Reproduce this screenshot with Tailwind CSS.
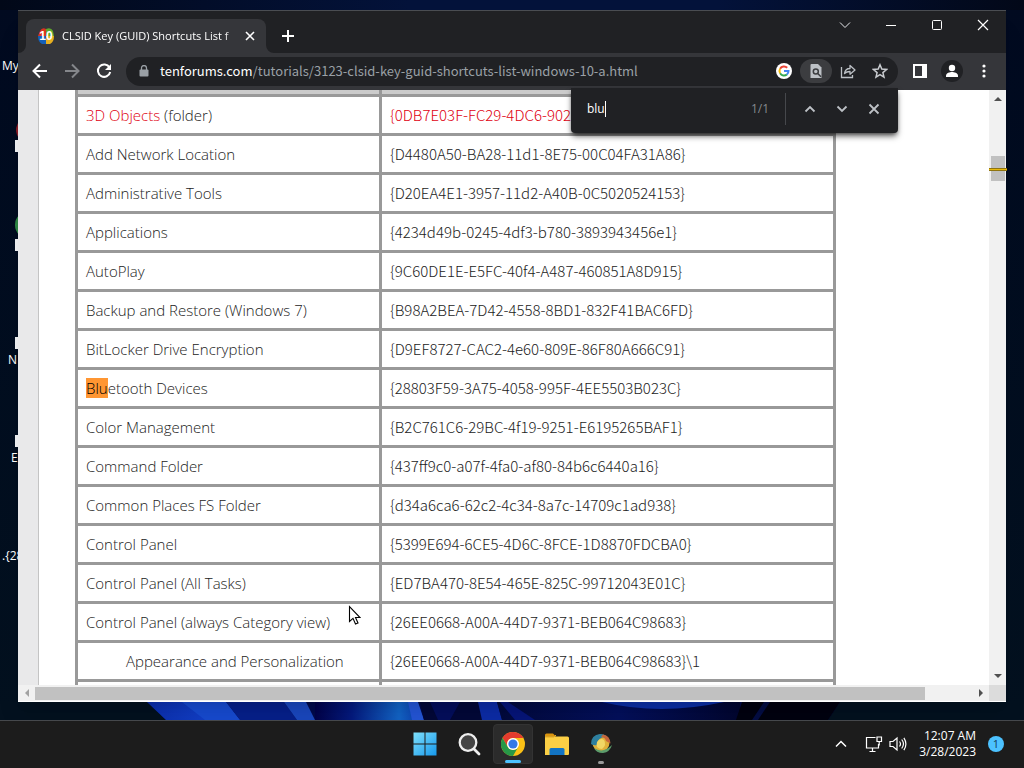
<!DOCTYPE html>
<html lang="en">
<head>
    <meta charset="UTF-8">
    <meta name="viewport" content="width=device-width, initial-scale=1.0">
    <title>CLSID Key (GUID) Shortcuts List</title>
    <script src="https://cdn.jsdelivr.net/npm/@tailwindcss/browser@4"></script>
</head>
<body class="h-screen flex flex-col overflow-hidden bg-[#020b1c] font-['Open_Sans',sans-serif] text-white">

    <!-- Desktop -->
    <div class="flex-1 min-h-0 relative overflow-hidden bg-linear-to-b from-[#010a20] to-[#03111f]">
        <svg class="absolute inset-x-0 top-0 w-full h-2.5" viewBox="0 0 1024 10" preserveAspectRatio="none" aria-hidden="true">
            <defs>
                <linearGradient id="sky"><stop offset="0" stop-color="#010818"/><stop offset=".4" stop-color="#03123a"/><stop offset=".7" stop-color="#03123a"/><stop offset="1" stop-color="#020818"/></linearGradient>
            </defs>
            <rect width="1024" height="10" fill="url(#sky)"/>
        </svg>
        <!-- Bloom wallpaper -->
        <svg class="absolute inset-x-0 bottom-0 w-full h-[18px]" viewBox="0 0 1024 18" preserveAspectRatio="none" aria-hidden="true">
            <defs>
                <linearGradient id="p1"><stop offset="0" stop-color="#0b2fae"/><stop offset="1" stop-color="#1548d8"/></linearGradient>
                <linearGradient id="p2"><stop offset="0" stop-color="#02024a"/><stop offset=".35" stop-color="#041a80"/><stop offset=".8" stop-color="#1265c8"/><stop offset="1" stop-color="#0b3cae"/></linearGradient>
                <linearGradient id="p3"><stop offset="0" stop-color="#02093c"/><stop offset=".5" stop-color="#030f5c"/><stop offset="1" stop-color="#020630"/></linearGradient>
            </defs>
            <rect width="1024" height="18" fill="#03111f"/>
            <path d="M147 0H840L828 18H166z" fill="#020a4c"/>
            <path d="M147 0H226L240 18H166z" fill="url(#p1)"/>
            <path d="M182 0H226L240 18H205z" fill="#174bd2"/>
            <path d="M226 0H284L297 18H240z" fill="#06208c"/>
            <path d="M284 0H306L315 18H297z" fill="#1a48c0"/>
            <path d="M315 0H412L420 18H315z" fill="url(#p2)"/>
            <path d="M408 0H418L424 18H412z" fill="#2456d8"/>
            <path d="M420 0H478L484 18H424z" fill="#030838"/>
            <path d="M430 0H460L450 18H438z" fill="#040e5c"/>
            <path d="M478 0H497L502 18H482z" fill="#0c2ca8"/>
            <path d="M497 0H740V18H502z" fill="url(#p3)"/>
            <path d="M508 0L535 18H515L500 0z" fill="#06157a"/>
            <path d="M602 0Q660 14 724 0z" fill="#0c30a8"/>
            <path d="M742 0H840L828 18H736z" fill="#01020f"/>
            <path d="M764 0H770L758 18H752z" fill="#040d44"/>
        </svg>

        <!-- Desktop icons, mostly behind the window -->
        <div class="absolute left-0.5 top-[58px] text-xs whitespace-nowrap">My</div>
        <div class="absolute left-4 top-[118px] size-6 rounded-full bg-[#8c1c28]"></div>
        <div class="absolute left-[15px] top-[211px] size-7 rounded-full bg-[#2f8a46]"></div>
        <div class="absolute left-[15px] top-[140px] size-3 bg-gray-100"></div>
        <div class="absolute left-[15px] top-[239px] size-3 bg-gray-100"></div>
        <div class="absolute left-[15px] top-[337px] size-3 bg-gray-100"></div>
        <div class="absolute left-2 top-[352px] text-xs whitespace-nowrap">N</div>
        <div class="absolute left-[15px] top-[435px] size-3 bg-gray-100"></div>
        <div class="absolute left-[11px] top-[450px] text-xs whitespace-nowrap">E</div>
        <div class="absolute left-0.5 top-[548px] text-xs whitespace-nowrap">.{28</div>

        <!-- Browser window -->
        <main class="absolute left-[18px] right-[18px] top-2.5 bottom-[18px] flex flex-col bg-[#202124] border-t border-[#4a4d52] shadow-xl">

            <!-- Tab strip -->
            <div class="h-[42px] shrink-0 flex items-end">
                <div class="relative ml-2 w-60 h-[34px] flex items-center pl-3 pr-2 gap-2 rounded-t-lg bg-[#35363a]">
                    <svg class="absolute -left-2 bottom-0 size-2" viewBox="0 0 8 8" aria-hidden="true"><path d="M8 0v8H0a8 8 0 0 0 8-8z" fill="#35363a"/></svg>
                    <svg class="absolute -right-2 bottom-0 size-2" viewBox="0 0 8 8" aria-hidden="true"><path d="M0 0v8h8a8 8 0 0 1-8-8z" fill="#35363a"/></svg>
                    <div class="relative size-4 shrink-0">
                        <svg class="size-4" viewBox="0 0 16 16" aria-hidden="true">
                            <path d="M8 8V1Q4-1 2 3L0 8z" fill="#d9341f"/>
                            <path d="M8 8V1Q13-1 15 3L16 8z" fill="#5fa82c"/>
                            <path d="M8 8H0Q0 14 4 16H8z" fill="#1560b8"/>
                            <path d="M8 8H16Q16 14 12 16H8z" fill="#e8b020"/>
                        </svg>
                        <span class="absolute inset-0 text-center text-xs leading-4 font-bold font-['Liberation_Sans',sans-serif]">10</span>
                    </div>
                    <span class="flex-1 min-w-0 whitespace-nowrap text-[11px] mask-r-from-95% mask-r-to-100%">CLSID Key (GUID) Shortcuts List f</span>
                    <button aria-label="Close tab" class="size-4 shrink-0 flex items-center justify-center">
                        <svg class="size-4" viewBox="0 0 16 16" fill="none" stroke="#fff" stroke-width="1.6"><path d="M4 4l8 8M12 4l-8 8"/></svg>
                    </button>
                </div>
                <button aria-label="New tab" class="size-8 ml-1.5 mb-px flex items-center justify-center">
                    <svg class="size-4" viewBox="0 0 16 16" fill="none" stroke="#fff" stroke-width="2"><path d="M8 2v12M2 8h12"/></svg>
                </button>
                <div class="ml-auto self-start flex h-7">
                    <button aria-label="Search tabs" class="w-[46px] flex items-center justify-center">
                        <svg class="size-3" viewBox="0 0 12 12" fill="none" stroke="#e8eaed"><path d="M1 3.5l5 5 5-5"/></svg>
                    </button>
                    <button aria-label="Minimize" class="w-[46px] flex items-center justify-center">
                        <svg class="size-3" viewBox="0 0 12 12" fill="none" stroke="#fff"><path d="M1 6.5h10"/></svg>
                    </button>
                    <button aria-label="Maximize" class="w-[46px] flex items-center justify-center">
                        <svg class="size-3" viewBox="0 0 12 12" fill="none" stroke="#fff"><rect x="1.5" y="1.5" width="9" height="9" rx="1"/></svg>
                    </button>
                    <button aria-label="Close" class="w-[46px] flex items-center justify-center">
                        <svg class="size-3" viewBox="0 0 12 12" fill="none" stroke="#fff" stroke-width="1.2"><path d="M1 1l10 10M11 1L1 11"/></svg>
                    </button>
                </div>
            </div>

            <!-- Toolbar -->
            <div class="h-[37px] shrink-0 flex items-center pl-1.5 pr-1.5 pb-px bg-[#35363a]">
                <button aria-label="Back" class="size-8 flex items-center justify-center">
                    <svg class="size-4" viewBox="0 0 16 16" fill="none" stroke="#fff" stroke-width="2"><path d="M15 8H2M8 1.5L1.5 8 8 14.500"/></svg>
                </button>
                <button aria-label="Forward" class="size-8 flex items-center justify-center">
                    <svg class="size-4" viewBox="0 0 16 16" fill="none" stroke="#85878b" stroke-width="2"><path d="M1 8h13M8 1.5L14.500 8 8 14.500"/></svg>
                </button>
                <button aria-label="Reload" class="size-8 flex items-center justify-center">
                    <svg class="size-4" viewBox="0 0 16 16" fill="none" stroke="#fff" stroke-width="2"><path d="M13.500 4.500A6.200 6.200 0 1 0 14.200 9"/><path d="M15 1v6H9z" fill="#fff" stroke="none"/></svg>
                </button>
                <div class="flex-1 min-w-0 h-[29px] ml-1.5 mr-1.5 flex items-center pl-3 pr-0.5 rounded-full bg-[#202124] text-[13px] font-['Noto_Sans_CJK_SC',sans-serif]">
                    <svg class="w-2.5 h-3 mx-px shrink-0" viewBox="0 0 10 12" aria-hidden="true"><path d="M2.500 5V3a2.500 2.500 0 0 1 5 0v2" fill="none" stroke="#9aa0a6" stroke-width="1.300"/><rect x="0.500" y="4.500" width="9" height="7" rx="1" fill="#9aa0a6"/></svg>
                    <label for="url" class="ml-2.5 text-white">tenforums.com</label>
                    <input id="url" type="text" value="/tutorials/3123-clsid-key-guid-shortcuts-list-windows-10-a.html" class="flex-1 min-w-0 bg-transparent text-[#9aa0a6] outline-none">
                    <button aria-label="Google" class="size-8 flex items-center justify-center">
                        <svg class="size-4" viewBox="0 0 16 16" fill="none" stroke-width="2">
                            <circle cx="8" cy="8" r="8" fill="#fff"/>
                            <path d="M11.200 4.800A4.500 4.500 0 0 0 4.100 5.750" stroke="#ea4335"/>
                            <path d="M4.100 5.750A4.500 4.500 0 0 0 4.100 10.250" stroke="#fbbc05"/>
                            <path d="M4.100 10.250A4.500 4.500 0 0 0 10.900 11.450" stroke="#34a853"/>
                            <path d="M10.900 11.450A4.500 4.500 0 0 0 12.500 8H8" stroke="#4285f4"/>
                        </svg>
                    </button>
                    <button aria-label="Find in page" class="w-8 h-6 rounded-full bg-[#3c3d40] flex items-center justify-center">
                        <svg class="size-4" viewBox="0 0 16 16"><path d="M3.500 1H10l3.500 3.500V15H2.500V2a1 1 0 0 1 1-1z" fill="#bdc1c6"/><circle cx="7.800" cy="8.500" r="2.500" fill="none" stroke="#3c3d40" stroke-width="1.500"/><path d="M9.500 10.300l3.500 3.500" stroke="#3c3d40" stroke-width="1.500"/></svg>
                    </button>
                    <button aria-label="Share" class="size-8 flex items-center justify-center">
                        <svg class="size-4" viewBox="0 0 16 16" fill="none" stroke="#bdc1c6" stroke-width="1.300"><path d="M1.500 4v10.500h11V12"/><path d="M4.500 10.500C5 7 7.500 5.500 10 5.500V2.500l5 4.500-5 4.200V8.500C7.500 8.500 6 9 4.500 10.500z" stroke-linejoin="round"/></svg>
                    </button>
                    <button aria-label="Bookmark this page" class="size-8 flex items-center justify-center">
                        <svg class="size-4" viewBox="0 0 16 16" fill="none" stroke="#c8cbcf" stroke-width="1.500"><path d="M8 1.800l1.800 4.300 4.700.4-3.600 3.100 1.100 4.600L8 11.700l-4 2.500 1.100-4.600L1.500 6.500l4.700-.4z"/></svg>
                    </button>
                </div>
                <button aria-label="Side panel" class="size-8 flex items-center justify-center">
                    <svg class="size-3.5" viewBox="0 0 14 14"><path d="M0 0h14v14H0z" fill="#fff"/><path d="M2 2h7v10H2z" fill="#35363a"/></svg>
                </button>
                <button aria-label="Profile" class="size-8 flex items-center justify-center">
                    <svg class="size-[22px]" viewBox="0 0 22 22"><circle cx="11" cy="11" r="11" fill="#202124"/><circle cx="11" cy="8" r="3.200" fill="#fff"/><path d="M5 17v-1.500c0-2.500 4-3.500 6-3.500s6 1 6 3.500V17z" fill="#fff"/></svg>
                </button>
                <button aria-label="Menu" class="size-8 flex items-center justify-center">
                    <svg class="size-4" viewBox="0 0 16 16" fill="#fff"><circle cx="8" cy="3" r="1.600"/><circle cx="8" cy="8" r="1.600"/><circle cx="8" cy="13" r="1.600"/></svg>
                </button>
            </div>

            <!-- Find bar -->
            <div class="absolute z-10 right-[108px] top-[77px] w-[327px] h-[45px] flex items-center pl-4 pr-2 pb-1 rounded-b bg-[#202124] shadow-md shadow-black/60">
                <input type="text" aria-label="Find in page" value="blu" class="field-sizing-content bg-transparent text-xs text-white outline-none">
                <span class="w-px h-4 bg-white"></span>
                <span class="ml-auto text-xs text-[#85898e]">1/1</span>
                <span class="w-px h-8 ml-4 mr-2 bg-[#46484c]"></span>
                <button aria-label="Previous" class="size-8 flex items-center justify-center">
                    <svg class="size-3" viewBox="0 0 12 12" fill="none" stroke="#bdc1c6" stroke-width="1.800"><path d="M1.500 8.500L6 4l4.500 4.500"/></svg>
                </button>
                <button aria-label="Next" class="size-8 flex items-center justify-center">
                    <svg class="size-3" viewBox="0 0 12 12" fill="none" stroke="#bdc1c6" stroke-width="1.800"><path d="M1.500 3.500L6 8l4.500-4.500"/></svg>
                </button>
                <button aria-label="Close find bar" class="size-8 flex items-center justify-center">
                    <svg class="size-3" viewBox="0 0 12 12" fill="none" stroke="#bdc1c6" stroke-width="1.800"><path d="M1.500 1.500l9 9M10.500 1.500l-9 9"/></svg>
                </button>
            </div>

            <!-- Page -->
            <div class="flex-1 min-h-0 flex bg-[#f1f1f1]">
                <div class="flex-1 min-w-0 overflow-hidden bg-[#e9e9ea] pl-5">
                    <div class="h-full bg-white border-l border-[#c4c4c4] pl-9">
                        <table class="w-[761px] table-fixed border-collapse text-[15px] leading-5 font-light text-[#222]">
                            <colgroup><col class="w-[304px]"><col></colgroup>
                            <tbody id="rows">
                                <tr class="h-[5px] bg-[#cbcbcb]"><td class="border-x-3 border-[#999]"></td><td class="border-x-3 border-[#999]"></td></tr>
                            </tbody>
                        </table>
                    </div>
                </div>
                <div class="w-[17px] shrink-0 flex flex-col items-center bg-[#f1f1f1]">
                    <svg class="w-2 h-[17px]" viewBox="0 0 8 17" aria-hidden="true"><path d="M0 11l4-4 4 4z" fill="#505050"/></svg>
                    <div class="relative mt-[49px] w-3.5 h-[25px] bg-[#c1c1c1]">
                        <div class="absolute -inset-x-0.5 top-3 h-[3px] border-y border-[#8f7410] bg-[#e8b90c]"></div>
                    </div>
                    <svg class="mt-auto w-2 h-[17px]" viewBox="0 0 8 17" aria-hidden="true"><path d="M0 6h8l-4 4z" fill="#505050"/></svg>
                </div>
            </div>
            <div class="h-[17px] shrink-0 flex items-center bg-[#f1f1f1] border-b border-white">
                <svg class="w-[17px] h-2" viewBox="0 0 17 8" aria-hidden="true"><path d="M11 0v8L7 4z" fill="#a3a3a3"/></svg>
                <div class="flex-1"><div class="w-[95%] h-[13px] bg-[#c1c1c1]"></div></div>
                <svg class="w-[17px] h-2" viewBox="0 0 17 8" aria-hidden="true"><path d="M7 0v8l4-4z" fill="#505050"/></svg>
                <div class="w-[17px] h-full bg-[#dcdcdc]"></div>
            </div>
        </main>

        <!-- Mouse pointer -->
        <svg class="absolute left-[348px] top-[605px] w-[13px] h-5" viewBox="0 0 13 20" aria-hidden="true"><path d="M1.500 1.500v15l3.500-3.200 2.500 5.700 2.500-1-2.500-5.500h4.500z" fill="#fff" stroke="#000" stroke-width="1.100"/></svg>
    </div>

    <!-- Taskbar -->
    <footer class="relative h-12 shrink-0 flex items-center justify-end bg-[#1c1c1c] border-t border-[#45484c]">
        <nav class="absolute inset-0 flex items-center justify-center gap-1 pl-0.5 pb-px">
            <button aria-label="Start" class="size-10 flex items-center justify-center">
                <svg class="size-6" viewBox="0 0 24 24"><defs><linearGradient id="win" x2="1" y2="1"><stop offset="0" stop-color="#7fe0fb"/><stop offset="1" stop-color="#1698ec"/></linearGradient></defs><path d="M0.500 0.500h11v11H0.500zM12.500 0.500h11v11h-11zM0.500 12.500h11v11H0.500zM12.500 12.500h11v11h-11z" fill="url(#win)"/></svg>
            </button>
            <button aria-label="Search" class="size-10 flex items-center justify-center">
                <svg class="size-6" viewBox="0 0 24 24"><circle cx="11" cy="10.500" r="8.300" fill="#444" stroke="#eee" stroke-width="2.300"/><path d="M17 17l5 5" stroke="#eee" stroke-width="2.800" stroke-linecap="round"/></svg>
            </button>
            <button aria-label="Google Chrome" class="relative size-10 flex items-center justify-center rounded bg-[#2b2b2b] border border-[#333]">
                <svg class="size-6" viewBox="0 0 24 24"><circle cx="12" cy="12" r="12" fill="#fbc116"/><path d="M1.600 6A12 12 0 0 1 22.400 6H12a6 6 0 0 0-5.200 9z" fill="#e33b2e"/><path d="M1.600 6A12 12 0 0 0 12 24l5.200-9a6 6 0 0 1-10.400 0z" fill="#279847"/><circle cx="12" cy="12" r="6" fill="#fff"/><circle cx="12" cy="12" r="4.600" fill="#3478e8"/></svg>
                <span class="absolute bottom-0 w-4 h-[3px] rounded-full bg-[#4cc2ff]"></span>
            </button>
            <button aria-label="File Explorer" class="size-10 flex items-center justify-center">
                <svg class="w-[26px] h-6" viewBox="0 0 26 24"><path d="M1 3a1.500 1.500 0 0 1 1.500-1.500H9L12 4.500H1z" fill="#d9940f"/><path d="M1 4.500h22.500A1.500 1.500 0 0 1 25 6v16a1 1 0 0 1-1 1H1z" fill="#fbcf45"/><path d="M1 5h9l2-2" fill="none" stroke="#e8aa20"/><path d="M5.500 23v-5.500A1.500 1.500 0 0 1 7 16h12a1.500 1.500 0 0 1 1.500 1.500V23z" fill="#1274c4"/></svg>
            </button>
            <button aria-label="Color app" class="relative size-10 flex items-center justify-center">
                <svg class="size-6" viewBox="0 0 24 24"><circle cx="12" cy="11" r="8.500" fill="#e0b13a"/><path d="M2 12Q2 3 11 2q5 0 7 3-9-1-10 8-3 1-6-1z" fill="#2e7f9e"/><path d="M14 2.500q7 1 7.500 9L17 9q-1-4-5-4z" fill="#c5663c"/><path d="M8 10q3-5 7-2 3 5-2 9-7 0-5-7z" fill="#f1d765"/><path d="M5 16q9 6 18-3-2 7-9 8-7 0-9-5z" fill="#5c9c6b"/></svg>
                <span class="absolute bottom-0 w-1.5 h-[3px] rounded-full bg-[#9a9a9a]"></span>
            </button>
        </nav>
        <div class="relative flex items-center pr-5 pb-px">
            <button aria-label="Hidden icons" class="w-8 h-10 flex items-center justify-center">
                <svg class="size-3" viewBox="0 0 12 12" fill="none" stroke="#fff" stroke-width="1.500"><path d="M1 8.500l5-5 5 5"/></svg>
            </button>
            <button aria-label="Network and volume" class="h-10 px-2 flex items-center gap-1.5">
                <svg class="w-[18px] h-4" viewBox="0 0 18 16" fill="none" stroke="#fff" stroke-width="1.200"><path d="M10.500 1.500h-9v10.500H13.500V8M4.500 15.500h6M7.500 12v3"/><path d="M12 1h4.500v4.500H12zM14.200 5.500V9.500"/></svg>
                <svg class="w-[18px] h-4" viewBox="0 0 18 16" fill="none" stroke="#fff" stroke-width="1.200"><path d="M1 5.500h3l4-3.500v12l-4-3.500H1z"/><path d="M10.500 5.500q2 2.500 0 5M12.700 3.500q3.500 4.500 0 9M14.900 1.800q4 6.200 0 12.400"/></svg>
            </button>
            <div class="ml-1 text-right text-xs leading-4 whitespace-nowrap">12:07 AM<br>3/28/2023</div>
            <span class="ml-3 size-4 rounded-full bg-[#4cc2ff] text-center text-[11px] leading-4 text-[#12405c]">1</span>
        </div>
    </footer>

    <script>
        const rows = [
            ['3D Objects', '{0DB7E03F-FC29-4DC6-9020-FF41B59E513A}'],
            ['Add Network Location', '{D4480A50-BA28-11d1-8E75-00C04FA31A86}'],
            ['Administrative Tools', '{D20EA4E1-3957-11d2-A40B-0C5020524153}'],
            ['Applications', '{4234d49b-0245-4df3-b780-3893943456e1}'],
            ['AutoPlay', '{9C60DE1E-E5FC-40f4-A487-460851A8D915}'],
            ['Backup and Restore (Windows 7)', '{B98A2BEA-7D42-4558-8BD1-832F41BAC6FD}'],
            ['BitLocker Drive Encryption', '{D9EF8727-CAC2-4e60-809E-86F80A666C91}'],
            ['Bluetooth Devices', '{28803F59-3A75-4058-995F-4EE5503B023C}'],
            ['Color Management', '{B2C761C6-29BC-4f19-9251-E6195265BAF1}'],
            ['Command Folder', '{437ff9c0-a07f-4fa0-af80-84b6c6440a16}'],
            ['Common Places FS Folder', '{d34a6ca6-62c2-4c34-8a7c-14709c1ad938}'],
            ['Control Panel', '{5399E694-6CE5-4D6C-8FCE-1D8870FDCBA0}'],
            ['Control Panel (All Tasks)', '{ED7BA470-8E54-465E-825C-99712043E01C}'],
            ['Control Panel (always Category view)', '{26EE0668-A00A-44D7-9371-BEB064C98683}'],
            ['Appearance and Personalization', '{26EE0668-A00A-44D7-9371-BEB064C98683}\\1'],
            ['', '']
        ];
        const body = document.getElementById('rows');
        rows.forEach(([name, guid], i) => {
            let label = name;
            if (i === 0) label = '<span class="text-[#e00010]">3D Objects</span> (folder)';
            if (name.startsWith('Blu')) label = '<mark class="bg-[#ff9632] text-black">Blu</mark>etooth Devices';
            const indent = name.startsWith('Appearance') ? 'pl-12' : 'pl-2';
            const color = i === 0 ? 'text-[#e00010]' : '';
            body.innerHTML += `<tr class="h-[39px]"><td class="border-3 border-[#999] py-0 ${indent}">${label}</td>` +
                `<td class="border-3 border-[#999] py-0 pl-2 font-['Noto_Sans_CJK_SC',sans-serif] ${color}">${guid}</td></tr>`;
        });
    </script>
</body>
</html>
